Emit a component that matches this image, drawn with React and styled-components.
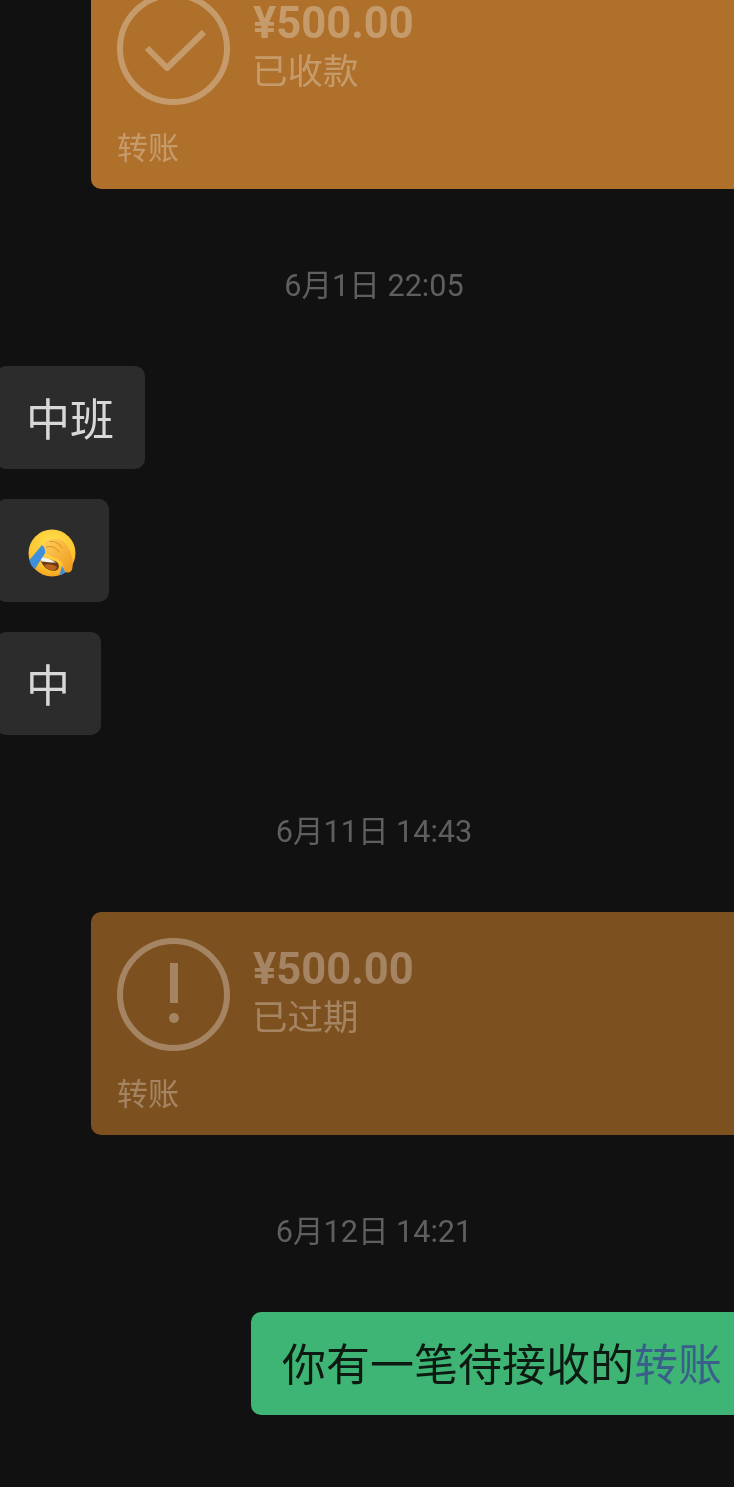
import React from 'react';
import styled, { createGlobalStyle } from 'styled-components';

const GlobalStyle = createGlobalStyle`
  html, body { margin: 0; padding: 0; background: #111111; }
  body { overflow: hidden; }
`;

const FONT = `Roboto, "Noto Sans CJK SC", sans-serif`;

const Screen = styled.main`
  width: 734px;
  height: 1487px;
  overflow: hidden;
  background: #111111;
  font-family: ${FONT};
`;

/* The conversation is scrolled, so the first card starts above the fold. */
const Thread = styled.div`
  display: flex;
  flex-direction: column;
  margin-top: -34px;
  will-change: transform;
`;

const Stamp = styled.div`
  height: 48px;
  margin: 72px 0 57px;
  padding: 1px 0 0 14px;
  box-sizing: border-box;
  font-size: 30.6px;
  line-height: 48px;
  text-align: center;
  color: #5f5f5f;
`;

const Card = styled.article`
  box-sizing: border-box;
  flex: none;
  width: 720px;
  height: 223px;
  margin-left: 91px;
  padding: 26px 26px 0;
  border-radius: 10px;
  background: ${p => (p.$expired ? '#7d501f' : '#ae702b')};
  color: rgba(255, 255, 255, 0.3);
`;

const CardMain = styled.div`
  display: flex;
  gap: 22px;
  height: 113px;
`;

const Glyph = styled.svg`
  flex: none;
  display: block;
  width: 113px;
  height: 113px;
`;

const Details = styled.div`
  display: flex;
  flex-direction: column;
`;

const Amount = styled.div`
  height: 60px;
  padding: 2px 0 0 1px;
  font-size: 43.5px;
  line-height: 60px;
  font-weight: 700;
`;

const Status = styled.div`
  height: 38px;
  margin-top: -1px;
  font-size: 35.5px;
  line-height: 38px;
`;

const CardLabel = styled.div`
  margin-top: 20px;
  font-size: 31px;
  line-height: 48px;
`;

const Bubble = styled.div`
  box-sizing: border-box;
  align-self: flex-start;
  height: 103px;
  margin: ${p => (p.$first ? '0' : '30px')} 0 0 -4px;
  padding: 6px 31px 0 30px;
  display: flex;
  align-items: center;
  border-radius: 10px;
  background: #2c2c2c;
  color: #d8d8d8;
  font-size: 44px;
  line-height: 88px;
`;

const EmojiBubble = styled(Bubble)`
  padding-top: 0;
`;

const SentBubble = styled.div`
  box-sizing: border-box;
  flex: none;
  width: 520px;
  height: 103px;
  margin-left: 251px;
  padding: 0 0 3px 31px;
  display: flex;
  align-items: center;
  border-radius: 10px;
  background: #3eb575;
  color: #0d1a12;
  font-size: 44px;
  white-space: nowrap;
`;

const TransferLink = styled.span`
  color: #3a5f8b;
`;

const Emoji = styled.svg`
  display: block;
  flex: none;
  width: 52px;
  height: 52px;
`;

const CheckGlyph = () => (
  <Glyph viewBox="0 0 113 113" fill="none">
    <circle cx="56.5" cy="56.5" r="53.5" stroke="currentColor" strokeWidth="6" />
    <path d="M30 56 L50 76 L87 40" stroke="currentColor" strokeWidth="6" strokeLinejoin="round" />
  </Glyph>
);

const AlertGlyph = () => (
  <Glyph viewBox="0 0 113 113" fill="none">
    <circle cx="56.5" cy="56.5" r="53.5" stroke="currentColor" strokeWidth="6" />
    <rect x="53" y="25" width="8" height="40" fill="currentColor" />
    <circle cx="57" cy="80" r="5" fill="currentColor" />
  </Glyph>
);

/* Laughing face with streaming tears and a hand across the forehead. */
const FacepalmEmoji = () => (
  <Emoji viewBox="-3 0 52 52">
    <defs>
      <radialGradient id="faceFill" cx="50%" cy="30%" r="75%">
        <stop offset="0" stopColor="#ffe04e" />
        <stop offset="0.65" stopColor="#fdc530" />
        <stop offset="1" stopColor="#f59f1e" />
      </radialGradient>
      <linearGradient id="handFill" x1="0" y1="0" x2="1" y2="1">
        <stop offset="0" stopColor="#fdcf5a" />
        <stop offset="1" stopColor="#f0981c" />
      </linearGradient>
    </defs>
    <circle cx="23" cy="28" r="23.5" fill="url(#faceFill)" />
    <path d="M10.5 31 L26 36 C31 38 31 44 27 45.5 C19 47 12 41 10.5 31 Z" fill="#6b3a14" />
    <path d="M11 32 C16 32 22 34 27 37.5 C22 37.5 16 37 12.5 36.5 Z" fill="#f7f1e6" />
    <path d="M15 40 C18 38.5 24 39 28 42 C27.5 44.5 25 45.5 23 45.5 C20 45 17 43 15 40 Z" fill="#b8641f" />
    <path d="M13 20 L18 25 L6 44 C3 42 1 39 0.5 35 Z" fill="#3f8fdc" />
    <path d="M33 41 L37 47 C35 48.5 33 49.5 30.5 50 Z" fill="#3f8fdc" />
    <path
      d="M16 17 C19 14.5 24 13.5 27.7 14 C32 13.5 37 18 39 22 C42 27 44 33 43.7 39 C43.7 43 43 46 41 47 C39 47.8 37 47.5 36 47 C34.5 43 34.5 39 32.7 37 C29 33 24 33 21 30.5 C18 29 15.5 28 16 25.5 C15 23 15 19 16 17 Z"
      fill="url(#handFill)"
    />
    <path d="M21 16.5 C26 16 31 18.5 33 23 M17.5 22 C22 20.5 27 22 30 27" fill="none" stroke="#d68818" strokeWidth="0.9" strokeLinecap="round" />
  </Emoji>
);

export default function App() {
  return (
    <Screen>
      <GlobalStyle />
      <Thread>
        <Card>
          <CardMain>
            <CheckGlyph />
            <Details>
              <Amount>¥500.00</Amount>
              <Status>已收款</Status>
            </Details>
          </CardMain>
          <CardLabel>转账</CardLabel>
        </Card>

        <Stamp>6月1日 22:05</Stamp>
        <Bubble $first>中班</Bubble>
        <EmojiBubble><FacepalmEmoji /></EmojiBubble>
        <Bubble>中</Bubble>

        <Stamp>6月11日 14:43</Stamp>
        <Card $expired>
          <CardMain>
            <AlertGlyph />
            <Details>
              <Amount>¥500.00</Amount>
              <Status>已过期</Status>
            </Details>
          </CardMain>
          <CardLabel>转账</CardLabel>
        </Card>

        <Stamp>6月12日 14:21</Stamp>
        <SentBubble>
          你有一笔待接收的<TransferLink>转账</TransferLink>
        </SentBubble>
      </Thread>
    </Screen>
  );
}
